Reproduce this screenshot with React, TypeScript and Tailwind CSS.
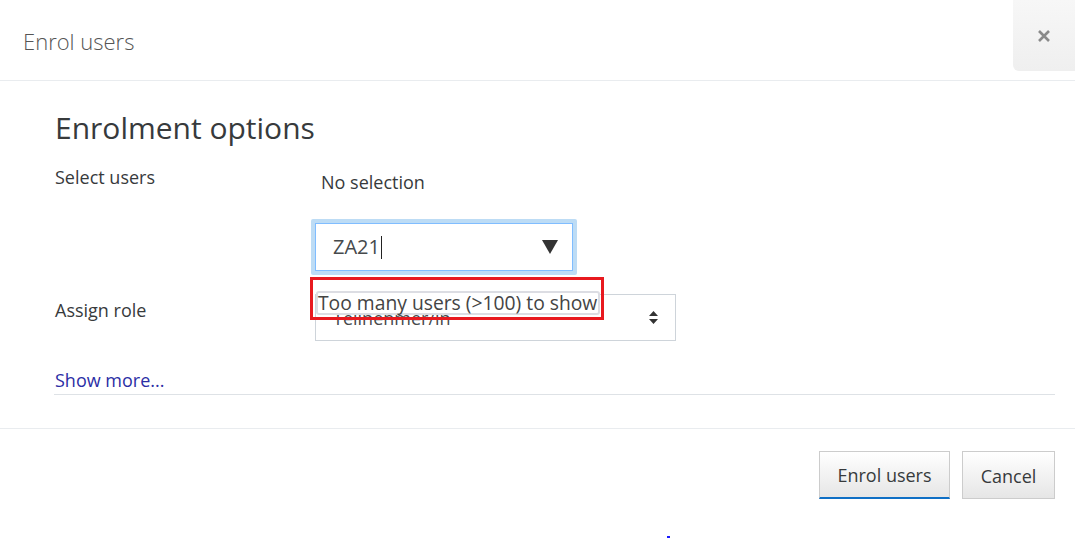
const App = () => {
  return (
    <div className="relative h-[538px] w-[1075px] overflow-hidden bg-white font-['Open_Sans',sans-serif] text-[#373a3c]">
      <header className="flex h-[81px] items-start justify-between border-b border-[#e9ecef]">
        <h5 className="pl-[23px] pt-[26px] text-[22px] font-light leading-[30px] text-[#555]">
          Enrol users
        </h5>
        <button
          className="flex h-[71px] w-[62px] items-center justify-center rounded-bl-md bg-gradient-to-b from-[#f7f7f7] to-[#efefef]"
          type="button"
        >
          <svg width="14" height="14" viewBox="0 0 14 14">
            <path d="M2 2 L12 12 M12 2 L2 12" stroke="#8a8a8a" strokeWidth="2.6" />
          </svg>
        </button>
      </header>

      <div className="flex h-[347px] flex-col pl-[54px] pr-[20px]">
        <h3 className="mt-[27px] pl-px text-[30px] leading-[40px] text-[#373a3c]">
          Enrolment options
        </h3>

        <div className="mt-[16px] flex">
          <div className="w-[261px] pl-px text-[18px] leading-[26px]">Select users</div>
          <div className="flex flex-col">
            <span className="pl-[6px] pt-[5px] text-[18px] leading-[26px]">No selection</span>
            <div className="-ml-[4px] mt-[24px] w-[266px] rounded-[2px] bg-[#bddcf5] p-[4px]">
              <div className="flex h-[48px] items-center justify-between border border-[#80bdff] bg-white pl-[17px] pr-[13px]">
                <span className="flex items-center text-[20px] text-[#464a4c]">
                  ZA21
                  <span className="ml-px inline-block h-[23px] w-px bg-[#222]" />
                </span>
                <svg width="18" height="16" viewBox="0 0 18 16">
                  <path d="M1 1 H17 L9 15 Z" fill="#333" />
                </svg>
              </div>
            </div>
          </div>
        </div>

        <div className="mt-[19px] flex">
          <div className="w-[261px] pl-px pt-[3px] text-[18px] leading-[26px]">Assign role</div>
          <div className="relative">
            <div className="flex h-[47px] w-[361px] items-center justify-between border border-[#ced4da] bg-white pl-[17px] pr-[17px]">
              <span className="pt-[2px] text-[18px] text-[#464a4c]">Teilnehmer/in</span>
              <svg width="9" height="13" viewBox="0 0 9 13">
                <path d="M4.5 0 L9 5 H0 Z M4.5 13 L9 8 H0 Z" fill="#333" />
              </svg>
            </div>
            <div className="absolute -left-[5px] -top-[17px] h-[43px] w-[294px] border-[3px] border-[#e8191f] pb-[2px] pl-[3px] pr-px pt-[11px]">
              <div className="flex h-[24px] items-center whitespace-nowrap rounded-[3px] border-2 border-[#dcdde3] bg-white text-[19.3px] leading-none text-[#444]">
                Too many users (&gt;100) to show
              </div>
            </div>
          </div>
        </div>

        <div className="mt-[26px] border-b border-[#dee2e6] pb-px pl-px">
          <a className="text-[18px] leading-[26px] text-[#2b2ea5]" href="#">
            Show more...
          </a>
        </div>
      </div>

      <footer className="flex justify-end gap-[12px] border-t border-[#e9ecef] pr-[20px] pt-[22px]">
        <button
          className="h-[48px] w-[131px] border border-[#ccc] border-b-2 border-b-[#0f6fc5] bg-gradient-to-b from-white to-[#e6e6e6] pt-[2px] text-[18px] text-[#373a3c]"
          type="button"
        >
          Enrol users
        </button>
        <button
          className="h-[48px] w-[93px] border border-[#ccc] bg-gradient-to-b from-white to-[#e6e6e6] pt-[2px] text-[18px] text-[#373a3c]"
          type="button"
        >
          Cancel
        </button>
      </footer>

      <span className="absolute left-[667px] top-[536px] h-[2px] w-[3px] bg-[#1a1aff]" />
    </div>
  );
};

export default App;
